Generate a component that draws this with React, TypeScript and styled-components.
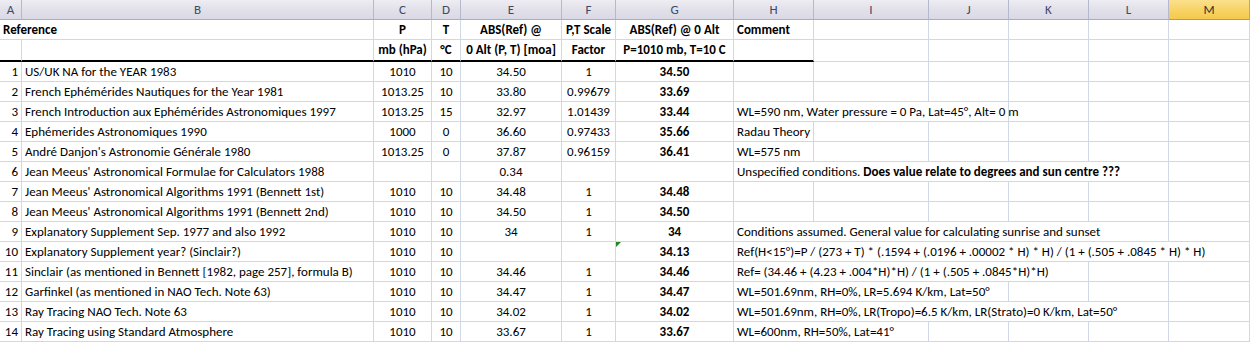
import React from "react";
import styled, { createGlobalStyle, css } from "styled-components";

const Global = createGlobalStyle`
  html, body { margin: 0; padding: 0; background: #ffffff; }
  body { font-family: "Carlito", "Lato", "Liberation Sans", sans-serif; }
`;

const COLS = [22, 352, 58, 29, 101, 54, 118, 80, 115, 80, 80, 80, 81];
const LETTERS = ["A", "B", "C", "D", "E", "F", "G", "H", "I", "J", "K", "L", "M"];
const GRID = "#d0d7e5";

const Sheet = styled.div`
  display: grid;
  grid-template-columns: ${COLS.map((c) => `${c}px`).join(" ")};
  width: 1250px;
  font-family: "Carlito", "Lato", "Liberation Sans", sans-serif;
  font-size: 13px;
  color: #000;
  overflow: hidden;
`;

const ColHead = styled.div<{ $selected?: boolean }>`
  box-sizing: border-box;
  height: 20px;
  display: flex;
  align-items: center;
  justify-content: center;
  font-size: 13px;
  color: #3d4a66;
  border-right: 1px solid #b6b9cd;
  border-bottom: 1px solid #a8acc4;
  background: linear-gradient(#eeedf3, #e2e1ea 50%, #d9d8e5);
  ${(p) =>
    p.$selected &&
    css`
      color: #333;
      background: linear-gradient(#fbe08c, #f8d467 50%, #f4c94c);
      border-right: 1px solid #c9a94e;
      border-bottom: 1px solid #c29a3a;
    `}
`;

type Align = "left" | "center" | "right";

const Cell = styled.div<{ $align?: Align; $bold?: boolean; $thick?: boolean; $span?: number; $tall?: boolean }>`
  position: relative;
  box-sizing: border-box;
  height: ${(p) => (p.$tall ? 22 : 20)}px;
  grid-column: span ${(p) => p.$span ?? 1};
  border-right: 1px solid ${GRID};
  border-bottom: ${(p) => (p.$thick ? "2px solid #000" : `1px solid ${GRID}`)};
  padding: 0 3px;
  line-height: 20px;
  white-space: nowrap;
  text-align: ${(p) => p.$align ?? "left"};
  font-weight: ${(p) => (p.$bold ? 700 : 400)};
`;

const Flag = styled.span`
  position: absolute;
  top: 0;
  left: 0;
  width: 0;
  height: 0;
  border-top: 5px solid #1c8a1c;
  border-right: 5px solid transparent;
`;

const Strong = styled.b`
  font-weight: 700;
`;

type Row = {
  n: number;
  ref: string;
  p: string;
  t: string;
  abs: string;
  factor: string;
  res: string;
  comment?: React.ReactNode;
  span?: number;
  flag?: boolean;
};

const rows: Row[] = [
  { n: 1, ref: "US/UK NA for the YEAR 1983", p: "1010", t: "10", abs: "34.50", factor: "1", res: "34.50" },
  { n: 2, ref: "French Ephémérides Nautiques for the Year 1981", p: "1013.25", t: "10", abs: "33.80", factor: "0.99679", res: "33.69" },
  {
    n: 3,
    ref: "French Introduction aux Ephémérides Astronomiques 1997",
    p: "1013.25",
    t: "15",
    abs: "32.97",
    factor: "1.01439",
    res: "33.44",
    comment: "WL=590 nm, Water pressure = 0 Pa, Lat=45°, Alt= 0 m",
    span: 3,
  },
  { n: 4, ref: "Ephémerides Astronomiques 1990", p: "1000", t: "0", abs: "36.60", factor: "0.97433", res: "35.66", comment: "Radau Theory", span: 1 },
  { n: 5, ref: "André Danjon's Astronomie Générale 1980", p: "1013.25", t: "0", abs: "37.87", factor: "0.96159", res: "36.41", comment: "WL=575 nm", span: 1 },
  {
    n: 6,
    ref: "Jean Meeus' Astronomical Formulae for Calculators 1988",
    p: "",
    t: "",
    abs: "0.34",
    factor: "",
    res: "",
    comment: (
      <>
        Unspecified conditions. <Strong>Does value relate to degrees and sun centre ???</Strong>
      </>
    ),
    span: 5,
  },
  { n: 7, ref: "Jean Meeus' Astronomical Algorithms 1991 (Bennett 1st)", p: "1010", t: "10", abs: "34.48", factor: "1", res: "34.48" },
  { n: 8, ref: "Jean Meeus' Astronomical Algorithms 1991 (Bennett 2nd)", p: "1010", t: "10", abs: "34.50", factor: "1", res: "34.50" },
  {
    n: 9,
    ref: "Explanatory Supplement Sep. 1977 and also 1992",
    p: "1010",
    t: "10",
    abs: "34",
    factor: "1",
    res: "34",
    comment: "Conditions assumed. General value for calculating sunrise and sunset",
    span: 5,
  },
  {
    n: 10,
    ref: "Explanatory Supplement year? (Sinclair?)",
    p: "1010",
    t: "10",
    abs: "",
    factor: "",
    res: "34.13",
    comment: "Ref(H<15°)=P / (273 + T) * (.1594 + (.0196 + .00002 * H) * H) / (1 + (.505 + .0845 * H) * H)",
    span: 6,
    flag: true,
  },
  {
    n: 11,
    ref: "Sinclair (as mentioned in Bennett [1982, page 257], formula B)",
    p: "1010",
    t: "10",
    abs: "34.46",
    factor: "1",
    res: "34.46",
    comment: "Ref= (34.46 + (4.23 + .004*H)*H) / (1 + (.505 + .0845*H)*H)",
    span: 4,
  },
  {
    n: 12,
    ref: "Garfinkel (as mentioned in NAO Tech. Note 63)",
    p: "1010",
    t: "10",
    abs: "34.47",
    factor: "1",
    res: "34.47",
    comment: "WL=501.69nm, RH=0%, LR=5.694 K/km, Lat=50°",
    span: 3,
  },
  {
    n: 13,
    ref: "Ray Tracing NAO Tech. Note 63",
    p: "1010",
    t: "10",
    abs: "34.02",
    factor: "1",
    res: "34.02",
    comment: "WL=501.69nm, RH=0%, LR(Tropo)=6.5 K/km, LR(Strato)=0 K/km, Lat=50°",
    span: 5,
  },
  {
    n: 14,
    ref: "Ray Tracing using Standard Atmosphere",
    p: "1010",
    t: "10",
    abs: "33.67",
    factor: "1",
    res: "33.67",
    comment: "WL=600nm, RH=50%, Lat=41°",
    span: 2,
  },
];

const blanks = (count: number, key: string, tall?: boolean) =>
  Array.from({ length: count }, (_, i) => <Cell key={`${key}-${i}`} $tall={tall} />);

export default function App() {
  return (
    <>
      <Global />
      <Sheet>
        {LETTERS.map((l) => (
          <ColHead key={l} $selected={l === "M"}>
            {l}
          </ColHead>
        ))}

        <Cell $span={2} $bold>
          Reference
        </Cell>
        <Cell $align="center" $bold>P</Cell>
        <Cell $align="center" $bold>T</Cell>
        <Cell $align="center" $bold>ABS(Ref) @</Cell>
        <Cell $align="center" $bold>P,T Scale</Cell>
        <Cell $align="center" $bold>ABS(Ref) @ 0 Alt</Cell>
        <Cell $bold>Comment</Cell>
        {blanks(5, "h1")}

        <Cell $tall $thick />
        <Cell $tall $thick />
        <Cell $tall $thick $align="center" $bold>mb (hPa)</Cell>
        <Cell $tall $thick $align="center" $bold>°C</Cell>
        <Cell $tall $thick $align="center" $bold>0 Alt (P, T) [moa]</Cell>
        <Cell $tall $thick $align="center" $bold>Factor</Cell>
        <Cell $tall $thick $align="center" $bold>P=1010 mb, T=10 C</Cell>
        <Cell $tall $thick />
        {blanks(5, "h2", true)}

        {rows.map((r) => {
          const span = r.comment ? r.span ?? 1 : 1;
          return (
            <React.Fragment key={r.n}>
              <Cell $align="right">{r.n}</Cell>
              <Cell>{r.ref}</Cell>
              <Cell $align="center">{r.p}</Cell>
              <Cell $align="center">{r.t}</Cell>
              <Cell $align="center">{r.abs}</Cell>
              <Cell $align="center">{r.factor}</Cell>
              <Cell $align="center" $bold>
                {r.flag && <Flag />}
                {r.res}
              </Cell>
              <Cell $span={span}>{r.comment}</Cell>
              {blanks(6 - span, `r${r.n}`)}
            </React.Fragment>
          );
        })}
      </Sheet>
    </>
  );
}
